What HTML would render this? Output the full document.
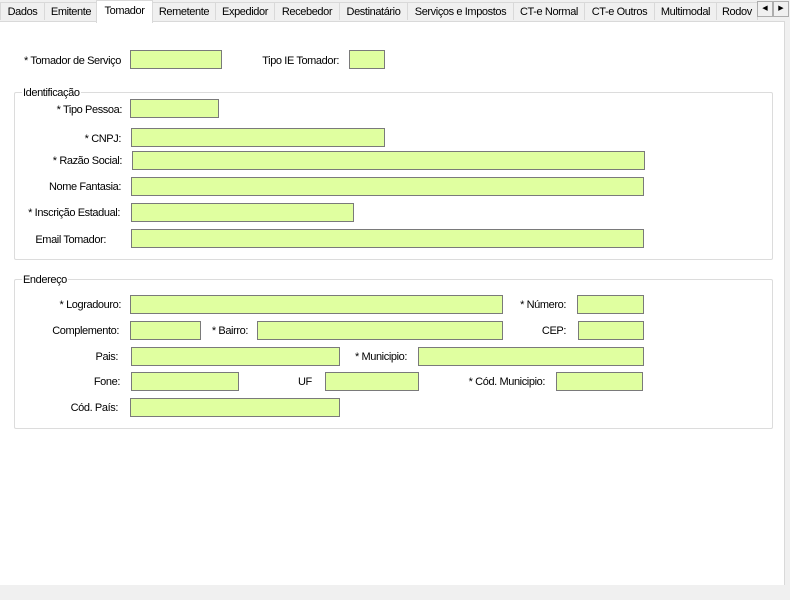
<!DOCTYPE html>
<html><head><meta charset="utf-8"><style>
html,body{margin:0;padding:0}
body{width:790px;height:600px;background:#f0f0f0;position:relative;overflow:hidden;font-family:"Liberation Sans",Arial,sans-serif;font-size:11px;letter-spacing:-0.4px;color:#000}
.panel{position:absolute;left:0;top:21px;width:784px;height:563px;background:#fff;border-right:1px solid #d9d9d9;border-top:1px solid #d9d9d9}
.tab{position:absolute;top:2px;height:18px;line-height:18px;background:#f0f0f0;border:1px solid #d9d9d9;border-bottom:none;text-align:center;box-sizing:border-box;font-size:11px;white-space:nowrap;overflow:hidden}
.sel{top:0;height:23px;background:#fff;line-height:20px;z-index:2}
.arr{position:absolute;top:1px;width:16px;height:16px;background:#f0f0f0;border:1px solid #adadad;box-sizing:border-box;font-size:7px;line-height:14px;text-align:center;letter-spacing:0}
.f{position:absolute;background:#e0ffa0;border:1px solid #7a7a7a;box-sizing:border-box;height:19px}
.l{position:absolute;white-space:nowrap;line-height:14px;transform:translateY(-6px)}
.g{position:absolute;border:1px solid #dcdcdc;border-radius:2px}
.lg{position:absolute;background:#fff;padding:0 1px;line-height:13px}
</style></head><body>
<div class="panel"></div>
<div class="tab" style="left:0;width:45px">Dados</div>
<div class="tab" style="left:44px;width:54px">Emitente</div>
<div class="tab sel" style="left:96px;width:57px">Tomador</div>
<div class="tab" style="left:152px;width:64px">Remetente</div>
<div class="tab" style="left:215px;width:60px">Expedidor</div>
<div class="tab" style="left:274px;width:66px">Recebedor</div>
<div class="tab" style="left:339px;width:69px">Destinatário</div>
<div class="tab" style="left:407px;width:107px">Serviços e Impostos</div>
<div class="tab" style="left:513px;width:72px">CT-e Normal</div>
<div class="tab" style="left:584px;width:71px">CT-e Outros</div>
<div class="tab" style="left:654px;width:63px">Multimodal</div>
<div class="tab" style="left:716px;width:42px;text-align:left;padding-left:5px">Rodov</div>
<div class="arr" style="left:757px">◀</div>
<div class="arr" style="left:773px">▶</div>

<div class="l" style="right:669px;top:60px">* Tomador de Serviço</div>
<div class="f" style="left:130px;top:50px;width:92px"></div>
<div class="l" style="right:451px;top:60px">Tipo IE Tomador:</div>
<div class="f" style="left:349px;top:50px;width:36px"></div>

<div class="g" style="left:14px;top:92px;width:757px;height:166px"></div>
<div class="lg" style="left:22px;top:87px">Identificação</div>
<div class="l" style="right:668px;top:109px">* Tipo Pessoa:</div>
<div class="f" style="left:130px;top:99px;width:89px"></div>
<div class="l" style="right:669px;top:138px">* CNPJ:</div>
<div class="f" style="left:131px;top:128px;width:254px"></div>
<div class="l" style="right:668px;top:160px">* Razão Social:</div>
<div class="f" style="left:132px;top:151px;width:513px"></div>
<div class="l" style="right:669px;top:186px">Nome Fantasia:</div>
<div class="f" style="left:131px;top:177px;width:513px"></div>
<div class="l" style="right:670px;top:212px">* Inscrição Estadual:</div>
<div class="f" style="left:131px;top:203px;width:223px"></div>
<div class="l" style="right:684px;top:239px">Email Tomador:</div>
<div class="f" style="left:131px;top:229px;width:513px"></div>

<div class="g" style="left:14px;top:279px;width:757px;height:148px"></div>
<div class="lg" style="left:22px;top:274px">Endereço</div>
<div class="l" style="right:669px;top:304px">* Logradouro:</div>
<div class="f" style="left:130px;top:295px;width:373px"></div>
<div class="l" style="right:224px;top:304px">* Número:</div>
<div class="f" style="left:577px;top:295px;width:67px"></div>
<div class="l" style="right:671px;top:330px">Complemento:</div>
<div class="f" style="left:130px;top:321px;width:71px"></div>
<div class="l" style="right:542px;top:330px">* Bairro:</div>
<div class="f" style="left:257px;top:321px;width:246px"></div>
<div class="l" style="right:224px;top:330px">CEP:</div>
<div class="f" style="left:578px;top:321px;width:66px"></div>
<div class="l" style="right:672px;top:356px">Pais:</div>
<div class="f" style="left:131px;top:347px;width:209px"></div>
<div class="l" style="right:383px;top:356px">* Municipio:</div>
<div class="f" style="left:418px;top:347px;width:226px"></div>
<div class="l" style="right:670px;top:381px">Fone:</div>
<div class="f" style="left:131px;top:372px;width:108px"></div>
<div class="l" style="left:298px;top:381px">UF</div>
<div class="f" style="left:325px;top:372px;width:94px"></div>
<div class="l" style="right:245px;top:381px">* Cód. Municipio:</div>
<div class="f" style="left:556px;top:372px;width:87px"></div>
<div class="l" style="right:672px;top:407px">Cód. País:</div>
<div class="f" style="left:130px;top:398px;width:210px"></div>
</body></html>
